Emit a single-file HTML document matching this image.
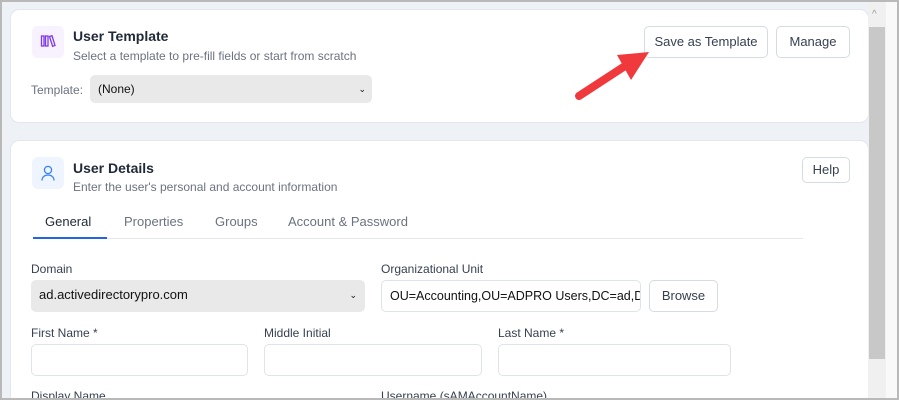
<!DOCTYPE html>
<html><head><style>
*{box-sizing:border-box;margin:0;padding:0}
html,body{width:899px;height:400px;overflow:hidden}
body{background:#eef2f7;font-family:"Liberation Sans",sans-serif;position:relative}
.card{position:absolute;left:10px;width:859px;background:#fff;border:1px solid #e2e7ef;border-radius:9px}
.ico{position:absolute;left:21px;width:32px;height:32px;border-radius:6px}
.t{position:absolute;left:62px;font-size:14px;color:#1f2937;font-weight:bold}
.s{position:absolute;left:62px;font-size:12px;color:#6b7280}
.btn{position:absolute;height:32px;border:1px solid #d5dbe5;border-radius:5px;font-size:13px;color:#374151;text-align:center;line-height:30px;background:#fff}
.lbl{position:absolute;font-size:12px;color:#374151}
.inp{position:absolute;height:32px;border:1px solid #dfe3ea;border-radius:5px;background:#fff;font-size:13px;color:#111;padding-left:8px;line-height:30px;white-space:nowrap;overflow:hidden}
.sel{background:#e9e9e9;border:none;border-radius:5px}
.tab{position:absolute;top:73px;font-size:13px;color:#6b7280}
</style></head><body>
<div class="card" style="top:9px;height:114px">
 <div class="ico" style="top:16px;background:#f8f1ff"><svg width="32" height="32"><g fill="none" stroke="#7c3aed" stroke-width="1.3"><rect x="9.5" y="10" width="2.5" height="10"/><rect x="13.5" y="10" width="2.5" height="10"/><path d="M17.5 10.5l2.5-.8 3 9.8-2.4.8z"/></g></svg></div>
 <div class="t" style="top:18px">User Template</div>
 <div class="s" style="top:39px">Select a template to pre-fill fields or start from scratch</div>
 <div class="lbl" style="left:20px;top:73px;color:#6b7280">Template:</div>
 <div class="inp sel" style="left:79px;top:65px;width:282px;height:28px;line-height:28px;font-size:12px">(None)<span style="position:absolute;right:6px;font-size:9px">⌄</span></div>
 <div class="btn" style="left:633px;top:16px;width:124px">Save as Template</div>
 <div class="btn" style="left:765px;top:16px;width:74px">Manage</div>
</div>
<svg style="position:absolute;left:0;top:0" width="899" height="400"><path d="M579 96L625 66" stroke="#f0393d" stroke-width="8" stroke-linecap="round"/><path d="M649 52L617 55L631 80Z" fill="#f0393d"/></svg>
<div class="card" style="top:140px;height:280px">
 <div class="ico" style="top:16px;background:#eef5ff"><svg width="32" height="32"><g fill="none" stroke="#3b82f6" stroke-width="1.3"><circle cx="16" cy="13" r="3.6"/><path d="M10 23.5c0-3.5 2.7-5.5 6-5.5s6 2 6 5.5"/></g></svg></div>
 <div class="t" style="top:19px">User Details</div>
 <div class="s" style="top:39px">Enter the user's personal and account information</div>
 <div class="btn" style="left:791px;top:16px;width:48px;height:26px;line-height:24px">Help</div>
 <div class="tab" style="left:34px;color:#1f2937">General</div>
 <div class="tab" style="left:113px">Properties</div>
 <div class="tab" style="left:204px">Groups</div>
 <div class="tab" style="left:277px">Account &amp; Password</div>
 <div style="position:absolute;left:22px;top:97px;width:770px;height:1px;background:#e5e7eb"></div>
 <div style="position:absolute;left:22px;top:96px;width:74px;height:2px;background:#2563eb"></div>
 <div class="lbl" style="left:20px;top:121px">Domain</div>
 <div class="inp sel" style="left:20px;top:139px;width:334px">ad.activedirectorypro.com<span style="position:absolute;right:8px;font-size:9px">⌄</span></div>
 <div class="lbl" style="left:370px;top:121px">Organizational Unit</div>
 <div class="inp" style="left:370px;top:139px;width:260px;font-size:12.5px">OU=Accounting,OU=ADPRO Users,DC=ad,D</div>
 <div class="btn" style="left:638px;top:139px;width:69px">Browse</div>
 <div class="lbl" style="left:20px;top:185px">First Name *</div>
 <div class="inp" style="left:20px;top:203px;width:217px"></div>
 <div class="lbl" style="left:253px;top:185px">Middle Initial</div>
 <div class="inp" style="left:253px;top:203px;width:218px"></div>
 <div class="lbl" style="left:487px;top:185px">Last Name *</div>
 <div class="inp" style="left:487px;top:203px;width:233px"></div>
 <div class="lbl" style="left:20px;top:248px">Display Name</div>
 <div class="lbl" style="left:370px;top:248px">Username (sAMAccountName)</div>
</div>
<div style="position:absolute;left:868px;top:2px;width:18px;height:398px;background:#f0f0f0"></div>
<div style="position:absolute;left:869px;top:27px;width:16px;height:332px;background:#c8c8c8"></div>
<div style="position:absolute;left:872px;top:9px;font-size:10px;color:#999">^</div>
<div style="position:absolute;left:886px;top:0;width:13px;height:400px;background:#f9f9f9"></div>
<div style="position:absolute;left:0;top:0;width:899px;height:400px;border:2px solid #b9b9b9;pointer-events:none"></div>
</body></html>
